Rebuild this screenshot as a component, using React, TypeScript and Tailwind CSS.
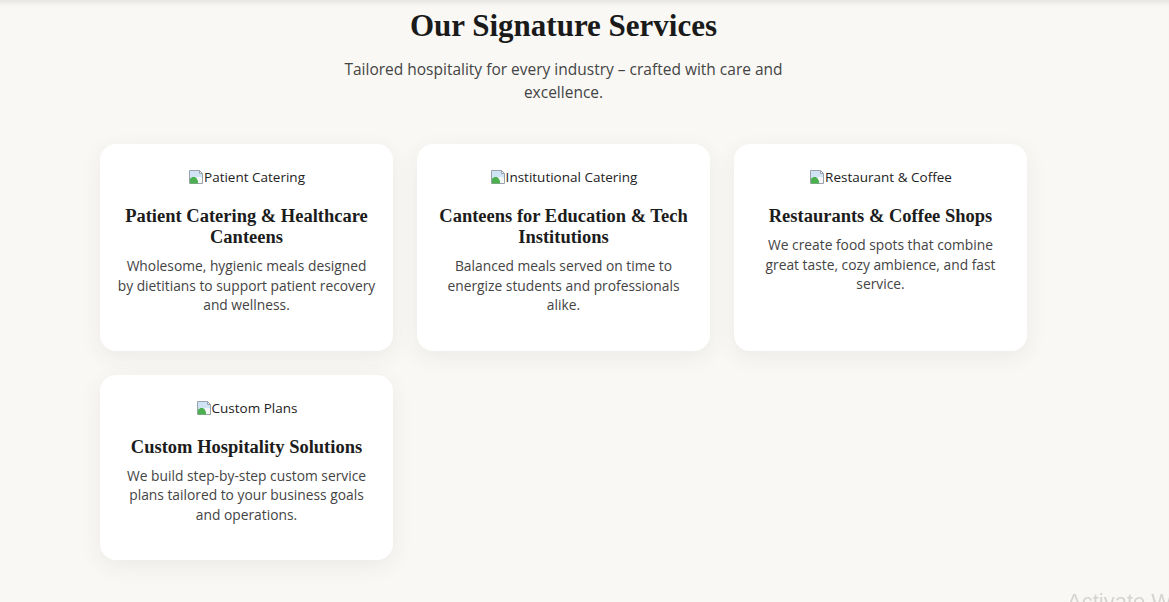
const services = [
  {
    alt: 'Patient Catering',
    title: ['Patient Catering & Healthcare', 'Canteens'],
    text: ['Wholesome, hygienic meals designed', 'by dietitians to support patient recovery', 'and wellness.'],
  },
  {
    alt: 'Institutional Catering',
    title: ['Canteens for Education & Tech', 'Institutions'],
    text: ['Balanced meals served on time to', 'energize students and professionals', 'alike.'],
  },
  {
    alt: 'Restaurant & Coffee',
    title: ['Restaurants & Coffee Shops'],
    text: ['We create food spots that combine', 'great taste, cozy ambience, and fast', 'service.'],
  },
  {
    alt: 'Custom Plans',
    title: ['Custom Hospitality Solutions'],
    text: ['We build step-by-step custom service', 'plans tailored to your business goals', 'and operations.'],
  },
];

function BrokenImage({ alt }: { alt: string }) {
  return (
    <div className="flex items-center justify-center font-['Open_Sans',sans-serif] text-[13.5px] leading-[18px] text-[#222]">
      <svg width="16" height="16" viewBox="0 0 16 16" className="shrink-0">
        <path d="M1.5 1.5h10l3 3v10h-13z" fill="#f4f6f8" stroke="#9aa3ab" />
        <path d="M2 9.5c2-2 4-2.5 6-1l2 3.5v2.5H2z" fill="#4caf50" />
        <path d="M2 2h9v3h3v3.5c-2-1-4-1.2-6 0-2-1.5-4-1-6 1z" fill="#cfe3f5" />
        <path d="M11.5 1.5v3h3" fill="none" stroke="#9aa3ab" />
      </svg>
      <span>{alt}</span>
    </div>
  );
}

function ServiceCard({ alt, title, text }: { alt: string; title: string[]; text: string[] }) {
  return (
    <div className="rounded-2xl bg-white px-4 pt-6 pb-9 text-center shadow-[0_6px_22px_rgba(60,50,30,0.07)]">
      <BrokenImage alt={alt} />
      <h3 className="mt-[20px] font-['Liberation_Serif',serif] text-[18.5px] font-bold leading-[21px] text-[#1c1c1c]">
        {title.map((t) => (
          <span key={t} className="block">{t}</span>
        ))}
      </h3>
      <p className="mt-2 font-['Open_Sans',sans-serif] text-[13.8px] leading-[19.5px] text-[#444]">
        {text.map((t) => (
          <span key={t} className="block">{t}</span>
        ))}
      </p>
    </div>
  );
}

export default function App() {
  return (
    <div className="relative min-h-screen overflow-hidden bg-[#f9f8f5] shadow-[inset_0_7px_6px_-5px_rgba(0,0,0,0.1)]">
      <section className="ml-[100px] w-[927px] pt-[6px]">
        <h2 className="text-center font-['Liberation_Serif',serif] text-[31px] font-bold leading-[40px] text-[#1a1a1a]">
          Our Signature Services
        </h2>
        <p className="mt-[12px] text-center font-['Open_Sans',sans-serif] text-[15.5px] leading-[23px] text-[#444]">
          Tailored hospitality for every industry – crafted with care and
          <br />
          excellence.
        </p>
        <div className="mt-10 grid grid-cols-3 gap-6">
          {services.map((s) => (
            <ServiceCard key={s.alt} {...s} />
          ))}
        </div>
      </section>
      <div className="pointer-events-none fixed left-[1067px] top-[585px] font-['Liberation_Sans',sans-serif] text-[22px] whitespace-nowrap text-[#d4d4d2]">
        Activate Windows
      </div>
    </div>
  );
}
